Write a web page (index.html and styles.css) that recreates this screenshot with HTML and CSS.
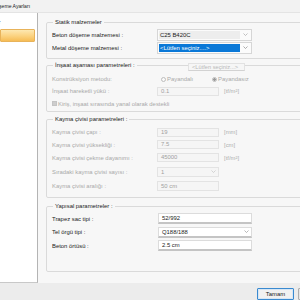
FILE: index.html
```html
<!DOCTYPE html>
<html lang="tr">
<head>
<meta charset="utf-8">
<link rel="stylesheet" href="styles.css">
</head>
<body>
<div class="window">
  <div class="titlebar"><span class="title">Döşeme Ayarları</span></div>
  <div class="main">
    <div class="sidebar">
      <div class="tree-item"><span class="tree-text">Ayarlar</span></div>
      <div class="tree-item selected"></div>
    </div>
    <div class="content">
      <fieldset class="group g1">
        <legend>Statik malzemeler</legend>
        <div class="row r13">
          <span class="lbl">Beton döşeme malzemesi :</span>
          <div class="combo wide ro"><span class="combo-text">C25 B420C</span><span class="arrow"><svg width="5" height="3" viewBox="0 0 5 3"><polyline points="0.5,0.5 2.5,2.5 4.5,0.5" fill="none" stroke="#a8a8a8" stroke-width="0.7"/></svg></span></div>
        </div>
        <div class="row r13">
          <span class="lbl">Metal döşeme malzemesi :</span>
          <div class="combo wide sel"><span class="combo-text">&lt;Lütfen seçiniz....&gt;</span><span class="arrow"><svg width="5" height="3" viewBox="0 0 5 3"><polyline points="0.5,0.5 2.5,2.5 4.5,0.5" fill="none" stroke="#8a8a8a" stroke-width="0.7"/></svg></span></div>
        </div>
      </fieldset>

      <fieldset class="group g2">
        <legend>İnşaat aşaması parametreleri :</legend>
        <div class="ghost-combo">&lt;Lütfen seçiniz...&gt;</div>
        <div class="row r12 dis">
          <span class="lbl">Konstrüksiyon metodu:</span>
          <span class="radio first"><span class="dot"></span>Payandalı</span>
          <span class="radio on"><span class="dot"></span>Payandasız</span>
        </div>
        <div class="row r12 dis">
          <span class="lbl">İnşaat hareketli yükü :</span>
          <div class="field short">0.1</div><span class="unit">[tf/m²]</span>
        </div>
        <div class="row r13 dis chkrow">
          <span class="chk"></span><span>Kiriş, inşaat sırasında yanal olarak destekli</span>
        </div>
      </fieldset>

      <fieldset class="group g3">
        <legend>Kayma çivisi parametreleri :</legend>
        <div class="row r12 dis">
          <span class="lbl">Kayma çivisi çapı :</span>
          <div class="field short">19</div><span class="unit">[mm]</span>
        </div>
        <div class="row r13 dis">
          <span class="lbl">Kayma çivisi yüksekliği :</span>
          <div class="field short">7.5</div><span class="unit">[cm]</span>
        </div>
        <div class="row r13 dis">
          <span class="lbl">Kayma çivisi çekme dayanımı :</span>
          <div class="field short">45000</div><span class="unit">[tf/m²]</span>
        </div>
        <div class="row r15 dis">
          <span class="lbl">Sıradaki kayma çivisi sayısı :</span>
          <div class="field short tall combo-like">1<span class="arrow"><svg width="5" height="3" viewBox="0 0 5 3"><polyline points="0.5,0.5 2.5,2.5 4.5,0.5" fill="none" stroke="#c4c4c4" stroke-width="0.7"/></svg></span></div>
        </div>
        <div class="row r14 dis">
          <span class="lbl">Kayma çivisi aralığı :</span>
          <div class="field short tall">50 cm</div>
        </div>
      </fieldset>

      <fieldset class="group g4">
        <legend>Yapısal parametreler :</legend>
        <div class="row r13">
          <span class="lbl">Trapez sac tipi :</span>
          <div class="input wide2">52/992</div>
        </div>
        <div class="row r14">
          <span class="lbl">Tel örgü tipi :</span>
          <div class="input wide2 combo-like">Q188/188<span class="arrow"><svg width="5" height="3" viewBox="0 0 5 3"><polyline points="0.5,0.5 2.5,2.5 4.5,0.5" fill="none" stroke="#9a9a9a" stroke-width="0.7"/></svg></span></div>
        </div>
        <div class="row r13">
          <span class="lbl">Beton örtüsü :</span>
          <div class="input wide2">2.5 cm</div>
        </div>
      </fieldset>
    </div>
  </div>
  <div class="footer">
    <button class="btn default" type="button">Tamam</button>
    <button class="btn" type="button" aria-label="İptal"></button>
  </div>
</div>
</body>
</html>
```

FILE: styles.css
```css
html, body {
  margin: 0;
  padding: 0;
}
body {
  width: 300px;
  height: 300px;
  overflow: hidden;
  background: #efefef;
  font-family: "Liberation Sans", Arial, sans-serif;
  font-size: 5.9px;
  color: #1a1a1a;
}
.window {
  width: 300px;
  height: 300px;
  display: flex;
  flex-direction: column;
  overflow: hidden;
}
.titlebar {
  height: 13px;
  flex: none;
  box-sizing: border-box;
  background: #f2f2f2;
  border-bottom: 1px solid #e4e4e4;
  display: flex;
  align-items: center;
  overflow: hidden;
}
.title {
  margin-left: -7.5px;
  font-size: 5.1px;
  white-space: nowrap;
  color: #222;
}
.main {
  height: 270px;
  flex: none;
  display: flex;
}
.sidebar {
  width: 38px;
  flex: none;
  box-sizing: border-box;
  background: #ffffff;
  border-right: 1px solid #b4b4b4;
  border-bottom: 1px solid #c8c8c8;
  padding-top: 4px;
  overflow: hidden;
}
.tree-item {
  height: 10px;
  line-height: 10px;
  white-space: nowrap;
  overflow: hidden;
}
.tree-text {
  display: inline-block;
  margin-left: -18px;
}
.tree-item.selected {
  margin-top: 2px;
  width: 35px;
  height: 13px;
  box-sizing: border-box;
  border: 1px solid #e8b35a;
  border-radius: 1px;
  background: linear-gradient(#fde8b2, #fbd27f 55%, #f6bc55);
}
.content {
  flex: 1;
  background: #f7f7f7;
  padding: 5px 0 0 8px;
  overflow: hidden;
  min-width: 0;
}
.group {
  width: 300px;
  margin: 0;
  border: 1px solid #dadada;
  border-radius: 2px;
  padding: 2px 0 4px 5px;
  position: relative;
}
.group legend {
  padding: 0 2px;
  margin-left: 1px;
  line-height: 8px;
  height: 8px;
  color: #1a1a1a;
}
.g2 { margin-top: 2px; padding-top: 4px; padding-bottom: 1px; }
.g3 { margin-top: 3px; padding-top: 3px; padding-bottom: 4px; }
.g4 { margin-top: 4px; padding-top: 2px; padding-bottom: 19px; }

.row {
  display: flex;
  align-items: center;
  white-space: nowrap;
}
.r12 { height: 12px; }
.r13 { height: 13px; }
.r14 { height: 14px; }
.r15 { height: 15px; }
.lbl {
  width: 105px;
  flex: none;
}
.dis { color: #a9a9a9; }

.combo {
  box-sizing: border-box;
  height: 12px;
  border: 1px solid #d6d6d6;
  background: #fbfbfb;
  display: flex;
  align-items: stretch;
  padding: 1px;
}
.combo.wide { width: 95px; }
.combo-text {
  flex: 1;
  display: flex;
  align-items: center;
  padding-left: 1px;
  background: #ededed;
  color: #222;
}
.combo.sel .combo-text {
  background: #0a78d7;
  color: #ffffff;
}
.arrow {
  width: 10px;
  flex: none;
  display: flex;
  align-items: center;
  justify-content: center;
}
.ghost-combo {
  position: absolute;
  left: 141px;
  top: -6px;
  width: 57px;
  height: 8px;
  box-sizing: border-box;
  border: 1px solid #e2e2e2;
  border-bottom-color: #d2d2d2;
  background: #f6f6f6;
  color: #b8b8b8;
  line-height: 6px;
  padding-left: 3px;
  font-size: 5.7px;
  white-space: nowrap;
  overflow: hidden;
}
.radio {
  display: inline-flex;
  align-items: center;
  width: 51px;
  flex: none;
}
.radio.first { margin-left: 4px; }
.dot {
  width: 5px;
  height: 5px;
  box-sizing: border-box;
  border: 1px solid #bdbdbd;
  border-radius: 50%;
  background: #fafafa;
  margin-right: 1px;
}
.radio.on .dot {
  background: radial-gradient(circle, #9a9a9a 0 1.3px, #fafafa 1.5px);
}
.field {
  box-sizing: border-box;
  height: 9px;
  border: 1px solid #e3e3e3;
  background: #f5f5f5;
  line-height: 7px;
  padding-left: 3px;
  color: #a0a0a0;
}
.field.short { width: 62px; }
.field.tall { height: 10px; line-height: 8px; }
.combo-like {
  display: flex;
  align-items: center;
  justify-content: space-between;
  padding-right: 0;
}
.unit {
  margin-left: 5px;
  color: #b0b0b0;
}
.chkrow { gap: 1px; }
.chk {
  width: 5px;
  height: 5px;
  box-sizing: border-box;
  border: 1px solid #c4c4c4;
  background: #cdcdcd;
}
.input {
  box-sizing: border-box;
  height: 11px;
  border: 1px solid #dcdcdc;
  border-bottom: 2px solid #c4c4c4;
  background: #ffffff;
  line-height: 8px;
  padding-left: 3px;
  color: #222;
}
.input.wide2 { width: 94px; margin-left: 1px; }
.footer {
  flex: 1;
  background: #ececec;
  display: flex;
  align-items: flex-start;
  padding: 5px 0 0 257px;
  gap: 4px;
}
.btn {
  flex: none;
  width: 37px;
  height: 12px;
  box-sizing: border-box;
  border: 1px solid #adadad;
  background: #e6e6e6;
  font-family: "Liberation Sans", Arial, sans-serif;
  font-size: 5.9px;
  color: #1a1a1a;
  padding: 0;
  border-radius: 1px;
}
.btn.default {
  border-color: #3a8ad0;
  box-shadow: inset 0 0 0 1px #d6e6f5;
  background: #f1f1f1;
}
```
